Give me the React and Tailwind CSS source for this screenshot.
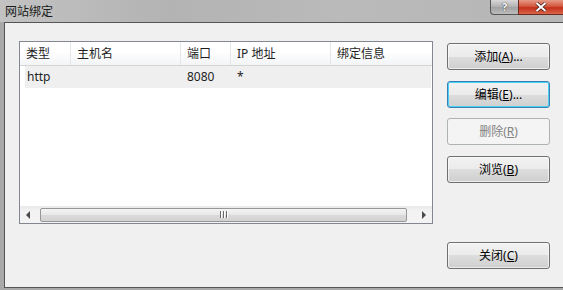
import React from "react";

const cols = [
  { label: "类型", w: "w-[51px]" },
  { label: "主机名", w: "w-[110px]" },
  { label: "端口", w: "w-[50px]" },
  { label: "IP 地址", w: "w-[100px]" },
  { label: "绑定信息", w: "flex-1" },
];

function Btn({ text, keyChar, tail = "", focused, disabled, className = "" }) {
  let look =
    "border-[#707070] bg-[linear-gradient(#f2f2f2_0%,#ebebeb_50%,#dddddd_50%,#cfcfcf_100%)] text-black shadow-[inset_0_0_0_1px_rgba(255,255,255,0.6)]";
  if (focused)
    look =
      "border-[#3c7fb1] bg-[linear-gradient(#f2f2f2_0%,#ebebeb_50%,#dddddd_50%,#cfcfcf_100%)] text-black shadow-[inset_0_0_0_1px_#48d1f8]";
  if (disabled) look = "border-[#adb2b5] bg-[#f4f4f4] text-[#838383]";
  return (
    <div
      className={`w-[103px] h-[27px] rounded-[3px] border flex items-center justify-center text-[12px] leading-[14px] ${look} ${className}`}
    >
      <span>
        {text}(<span className="underline">{keyChar}</span>){tail}
      </span>
    </div>
  );
}

function Arrow({ dir }) {
  return (
    <svg width="5" height="8" viewBox="0 0 5 8">
      {dir === "left" ? (
        <path d="M4 0 L0 4 L4 8 Z" fill="#4a4a4a" />
      ) : (
        <path d="M1 0 L5 4 L1 8 Z" fill="#4a4a4a" />
      )}
    </svg>
  );
}

export default function App() {
  return (
    <div className="w-[563px] h-[290px] overflow-hidden bg-[#a9a9a9] flex flex-col font-['Noto_Sans','Noto_Sans_CJK_SC',sans-serif]">
      {/* title bar */}
      <div className="h-[22px] flex bg-[linear-gradient(90deg,#c2c2c2,#b3b3b3_30%,#bababa_60%,#b6b6b6)]">
        <div className="pl-[5px] pt-[3px] text-[12px] leading-[16px] text-[#1b1b1b] font-['Noto_Sans_CJK_SC',sans-serif]">
          网站绑定
        </div>
        <div className="flex-1" />
        <div className="flex h-[15px] ml-[-2px]">
          <div className="w-[28px] h-full rounded-bl-[4px] border border-t-0 border-r-0 border-[#555] bg-[linear-gradient(#d8d8d8,#b0b0b0_50%,#a0a0a0_50%,#bcbcbc)] flex items-center justify-center">
            <span className="text-[11px] leading-[14px] font-bold text-white [text-shadow:0_0_1px_#333,0_0_1px_#333]">
              ?
            </span>
          </div>
          <div className="w-[45px] h-full border-b border-l border-[#6b2a23] bg-[linear-gradient(#e59a86,#d4573f_45%,#c4301a_55%,#d9654a)] flex items-center justify-center">
            <svg width="12" height="10" viewBox="0 0 12 10">
              <path d="M1.5 1 L10.5 9 M10.5 1 L1.5 9" stroke="#3a1a15" strokeWidth="3.4" />
              <path d="M1.5 1 L10.5 9 M10.5 1 L1.5 9" stroke="#fff" strokeWidth="2" />
            </svg>
          </div>
        </div>
      </div>

      {/* client area */}
      <div className="flex-1 ml-[4px] mb-[2px] border-l border-t border-b border-[#555] bg-[#f0f0f0] flex pl-[14px] text-[12px]">
        {/* list view */}
        <div className="mt-[18px] w-[414px] h-[183px] border border-[#828790] bg-white flex flex-col">
          <div className="h-[24px] flex border-b border-[#d5d5d5] bg-[linear-gradient(#ffffff,#ffffff_40%,#f3f4f6)]">
            {cols.map((c, i) => (
              <div
                key={i}
                className={`${c.w} flex items-center pl-[6px] ${i < 4 ? "border-r border-[#e3e6ea]" : ""}`}
              >
                <span className="leading-[14px] text-[#1e1e1e]">{c.label}</span>
              </div>
            ))}
          </div>
          <div className="h-[22px] ml-[5px] mr-[1px] flex items-center bg-[#efefef] text-[#1e1e1e]">
            <div className="w-[46px] pl-[2px]">http</div>
            <div className="w-[110px]" />
            <div className="w-[50px] pl-[6px]">8080</div>
            <div className="w-[100px] pl-[6px]">*</div>
          </div>
          <div className="flex-1" />
          {/* horizontal scrollbar */}
          <div className="h-[17px] flex items-center bg-[linear-gradient(#e9e9e9,#f3f3f3_30%,#f3f3f3)]">
            <div className="w-[17px] flex justify-center">
              <Arrow dir="left" />
            </div>
            <div className="ml-[3px] w-[367px] h-[14px] rounded-[2px] border border-[#979797] bg-[linear-gradient(#f4f4f4,#e7e7e7_50%,#dadada_50%,#d2d2d2)] flex items-center justify-center gap-[2px]">
              <div className="w-[1px] h-[7px] bg-[#6a6a6a] shadow-[1px_0_0_#fff]" />
              <div className="w-[1px] h-[7px] bg-[#6a6a6a] shadow-[1px_0_0_#fff]" />
              <div className="w-[1px] h-[7px] bg-[#6a6a6a] shadow-[1px_0_0_#fff]" />
            </div>
            <div className="flex-1" />
            <div className="w-[17px] flex justify-center">
              <Arrow dir="right" />
            </div>
          </div>
        </div>

        {/* buttons */}
        <div className="ml-[14px] pt-[20px] pb-[18px] flex flex-col">
          <Btn text="添加" keyChar="A" tail="..." />
          <Btn text="编辑" keyChar="E" tail="..." focused className="mt-[11px]" />
          <Btn text="删除" keyChar="R" disabled className="mt-[10px]" />
          <Btn text="浏览" keyChar="B" className="mt-[11px]" />
          <Btn text="关闭" keyChar="C" className="mt-auto" />
        </div>
      </div>
    </div>
  );
}
